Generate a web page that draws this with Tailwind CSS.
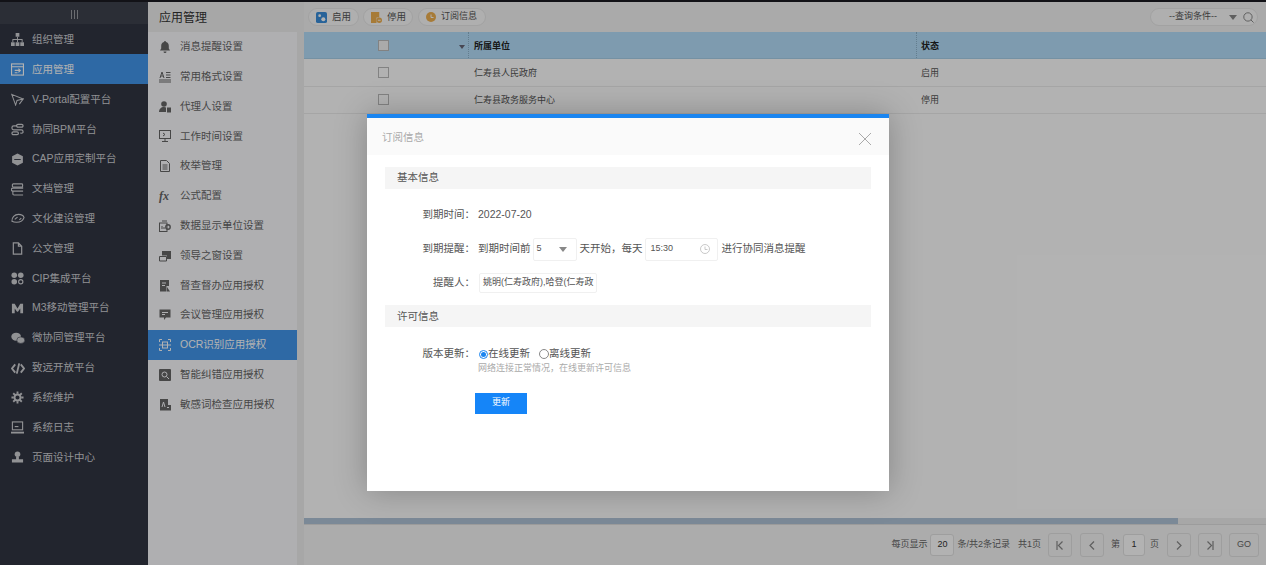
<!DOCTYPE html>
<html lang="zh-CN">
<head>
  <meta charset="UTF-8" />
  <title>应用管理</title>
  <script src="https://cdn.jsdelivr.net/npm/@tailwindcss/browser@4"></script>
</head>
<body class="relative w-[1266px] h-[565px] overflow-hidden bg-white font-['Liberation_Sans','Noto_Sans_CJK_SC',sans-serif] text-[10.5px] text-[#555]">
  <div class="h-[2px] bg-[#1a1b22]"></div>
  <div class="flex h-[563px]">
    <!-- main nav -->
    <aside class="w-[148px] shrink-0 bg-[#323643] text-[#d0d1d5]">
      <div class="h-[22px] pt-[2px] flex items-center justify-center gap-[2px] bg-[#3e424e]">
        <i class="block w-px h-[9px] bg-[#9a9ca3]"></i><i class="block w-px h-[9px] bg-[#9a9ca3]"></i><i class="block w-px h-[9px] bg-[#9a9ca3]"></i>
      </div>
      <nav class="flex flex-col">
        <a class="h-[29.83px] pt-[2px] flex items-center gap-[8px] pl-[11px]">
          <svg class="w-[13px] h-[13px]" viewBox="0 0 14 14" fill="currentColor"><rect x="5" y="0" width="4" height="4"/><rect x="0" y="10" width="4" height="4"/><rect x="5" y="10" width="4" height="4"/><rect x="10" y="10" width="4" height="4"/><path d="M6.500 4h1v2.500h5V10h-1V7.500h-4V10h-1V7.500h-4V10h-1V6.500h5z"/></svg>
          组织管理
        </a>
        <a class="h-[29.83px] pt-[2px] flex items-center gap-[8px] pl-[11px] bg-[#4397ec] text-white">
          <svg class="w-[13px] h-[13px]" viewBox="0 0 14 14" fill="none" stroke="currentColor" stroke-width="1.200"><rect x=".6" y="1" width="12.800" height="12"/><path d="M.6 4h12.800M4 8h6M8 6l2 2-2 2M4 10.500h3"/></svg>
          应用管理
        </a>
        <a class="h-[29.83px] pt-[2px] flex items-center gap-[8px] pl-[11px]">
          <svg class="w-[13px] h-[13px]" viewBox="0 0 14 14" fill="none" stroke="currentColor" stroke-width="1.100"><path d="M.8 1.500 13 6.500 6.500 8l-1.500 5zM6.500 8 13 6.500 9 12"/></svg>
          V-Portal配置平台
        </a>
        <a class="h-[29.83px] pt-[2px] flex items-center gap-[8px] pl-[11px]">
          <svg class="w-[13px] h-[13px]" viewBox="0 0 14 14" fill="none" stroke="currentColor" stroke-width="1.300"><rect x="6" y="1.500" width="7" height="3" rx="1.500"/><rect x="1" y="9.500" width="7" height="3" rx="1.500"/><path d="M6 3H3a2 2 0 0 0-2 2v.500a2 2 0 0 0 2 2h8a2 2 0 0 1 2 2v.500a2 2 0 0 1-2 1h-1"/></svg>
          协同BPM平台
        </a>
        <a class="h-[29.83px] pt-[2px] flex items-center gap-[8px] pl-[11px]">
          <svg class="w-[13px] h-[13px]" viewBox="0 0 14 14" fill="currentColor"><path d="M7 .5 12.800 3.500v7L7 13.500 1.200 10.500v-7z"/><path d="M3.500 6.500h7v1h-7z" fill="#323643"/></svg>
          CAP应用定制平台
        </a>
        <a class="h-[29.83px] pt-[2px] flex items-center gap-[8px] pl-[11px]">
          <svg class="w-[13px] h-[13px]" viewBox="0 0 14 14" fill="none" stroke="currentColor" stroke-width="1.200"><rect x="1.500" y="1" width="11" height="3.500" rx="1"/><path d="M12.500 4.500v1H2a1.200 1.200 0 0 0 0 3.200h11M2 8.700v3a1.200 1.200 0 0 0 1.200 1.200h9.800"/></svg>
          文档管理
        </a>
        <a class="h-[29.83px] pt-[2px] flex items-center gap-[7px] pl-[11px]">
          <svg class="w-[14px] h-[13px]" viewBox="0 0 15 14" fill="none" stroke="currentColor" stroke-width="1.200"><path d="M1 10c-.5-4 3-7.500 7-7.500 3 0 5.500 1.500 6 3.500-1 3-4 5-8 5-2 0-4-.5-5-1zM4 8l3-2.500M9 8.500l2-2"/></svg>
          文化建设管理
        </a>
        <a class="h-[29.83px] pt-[2px] flex items-center gap-[8px] pl-[11px]">
          <svg class="w-[13px] h-[13px]" viewBox="0 0 14 14" fill="none" stroke="currentColor" stroke-width="1.300"><path d="M2.500 1h5.500l3.500 3.500V13h-9zM8 1v3.500h3.500"/></svg>
          公文管理
        </a>
        <a class="h-[29.83px] pt-[2px] flex items-center gap-[8px] pl-[11px]">
          <svg class="w-[13px] h-[13px]" viewBox="0 0 14 14" fill="currentColor"><circle cx="3.500" cy="3.500" r="3"/><circle cx="10.500" cy="3.500" r="3"/><circle cx="3.500" cy="10.500" r="3"/><circle cx="10.500" cy="10.500" r="2.300" fill="none" stroke="currentColor" stroke-width="1.200"/></svg>
          CIP集成平台
        </a>
        <a class="h-[29.83px] pt-[2px] flex items-center gap-[8px] pl-[11px]">
          <svg class="w-[13px] h-[13px]" viewBox="0 0 14 14" fill="currentColor"><path d="M1 2h3l3 5 3-5h3v10h-3V7L7.500 10.500h-1L4 7v5H1z"/></svg>
          M3移动管理平台
        </a>
        <a class="h-[29.83px] pt-[2px] flex items-center gap-[7px] pl-[11px]">
          <svg class="w-[14px] h-[13px]" viewBox="0 0 15 14" fill="currentColor"><ellipse cx="5.500" cy="5" rx="5.200" ry="4.300"/><ellipse cx="10.500" cy="8.800" rx="4.300" ry="3.500" stroke="#323643" stroke-width=".6"/></svg>
          微协同管理平台
        </a>
        <a class="h-[29.83px] pt-[2px] flex items-center gap-[7px] pl-[11px]">
          <svg class="w-[14px] h-[13px]" viewBox="0 0 15 14" fill="none" stroke="currentColor" stroke-width="2"><path d="M4.500 2.500 1 7l3.500 4.500M10.500 2.500 14 7l-3.500 4.500M8.800 1.500 6.200 12.500"/></svg>
          致远开放平台
        </a>
        <a class="h-[29.83px] pt-[2px] flex items-center gap-[8px] pl-[11px]">
          <svg class="w-[13px] h-[13px]" viewBox="0 0 14 14" fill="none" stroke="currentColor"><circle cx="7" cy="7" r="3.200" stroke-width="2"/><path d="M7 .5v2.500M7 11v2.500M.5 7H3M11 7h2.500M2.400 2.400l1.800 1.800M9.800 9.800l1.800 1.800M2.400 11.600l1.800-1.800M9.800 4.200l1.800-1.800" stroke-width="2"/></svg>
          系统维护
        </a>
        <a class="h-[29.83px] pt-[2px] flex items-center gap-[8px] pl-[11px]">
          <svg class="w-[13px] h-[13px]" viewBox="0 0 14 14" fill="none" stroke="currentColor" stroke-width="1.200"><rect x="1.500" y="1" width="11" height="8.500"/><path d="M4 6h4"/><path d="M0 11.500h14V13.500H0z" fill="currentColor" stroke="none"/></svg>
          系统日志
        </a>
        <a class="h-[29.83px] pt-[2px] flex items-center gap-[8px] pl-[11px]">
          <svg class="w-[13px] h-[13px]" viewBox="0 0 14 14" fill="currentColor"><circle cx="7" cy="3.500" r="3"/><path d="M5.500 6h3v3h4.500v3.500H1V9h4.500z"/></svg>
          页面设计中心
        </a>
      </nav>
    </aside>

    <!-- sub nav -->
    <aside class="w-[156px] shrink-0 bg-[#f0f0f0]">
      <div class="h-[30px] pt-[2px] flex items-center pl-[11px] text-[12px] text-[#333]">应用管理</div>
      <nav class="w-[149px] h-[533px] flex flex-col bg-[#fbfbfe] text-[#666]">
        <a class="h-[29.83px] flex items-center gap-[9px] pl-[11px]">
          <svg class="w-[12px] h-[12px]" viewBox="0 0 12 12" fill="currentColor"><path d="M6 0a1 1 0 0 1 1 1c2 .5 2.800 2 2.800 4v2.500L11 9.500H1l1.200-2V5c0-2 .8-3.500 2.800-4a1 1 0 0 1 1-1zM4.500 10.500h3a1.500 1.500 0 0 1-3 0z"/></svg>
          消息提醒设置
        </a>
        <a class="h-[29.83px] flex items-center gap-[9px] pl-[11px]">
          <svg class="w-[12px] h-[12px]" viewBox="0 0 12 12" fill="none" stroke="currentColor"><path d="M1 7 3 1l2 6M1.800 5h2.400M7 1.500h4.500M7 4h4.500M7 6.500h4.500M0 9h12M0 11h12"/></svg>
          常用格式设置
        </a>
        <a class="h-[29.83px] flex items-center gap-[9px] pl-[11px]">
          <svg class="w-[12px] h-[12px]" viewBox="0 0 12 12" fill="currentColor"><circle cx="5" cy="3" r="2.800"/><path d="M0 11c0-3 2-5 5-5 1 0 1.500.2 2 .5V11z"/><rect x="8" y="6.500" width="4" height="5"/></svg>
          代理人设置
        </a>
        <a class="h-[29.83px] flex items-center gap-[9px] pl-[11px]">
          <svg class="w-[12px] h-[12px]" viewBox="0 0 12 12" fill="none" stroke="currentColor"><rect x=".5" y=".5" width="11" height="8"/><path d="M6 8.500V11M3 11.500h6M4 3l2 1.500L4 6"/></svg>
          工作时间设置
        </a>
        <a class="h-[29.83px] flex items-center gap-[9px] pl-[11px]">
          <svg class="w-[12px] h-[12px]" viewBox="0 0 12 12" fill="none" stroke="currentColor"><path d="M1.500.5h6l3 3v8h-9zM3.500 5h5M3.500 7h5M3.500 9h5"/></svg>
          枚举管理
        </a>
        <a class="h-[29.83px] flex items-center gap-[9px] pl-[11px]">
          <span class="w-[12px] font-['Liberation_Serif',serif] italic font-bold text-[12px] leading-none">fx</span>
          公式配置
        </a>
        <a class="h-[29.83px] flex items-center gap-[9px] pl-[11px]">
          <svg class="w-[12px] h-[12px]" viewBox="0 0 12 12" fill="none" stroke="currentColor"><rect x=".5" y="3" width="7.500" height="8.500"/><circle cx="9" cy="7" r="2.200" stroke-width="1.400"/><path d="M3 1h5M3 9V6M5 9V7"/></svg>
          数据显示单位设置
        </a>
        <a class="h-[29.83px] flex items-center gap-[9px] pl-[11px]">
          <svg class="w-[12px] h-[12px]" viewBox="0 0 12 12" fill="currentColor"><path d="M3 1h9v8H8V5.500H3z"/><path d="M.5 6.500h7v4.500H.5z" fill="none" stroke="currentColor"/></svg>
          领导之窗设置
        </a>
        <a class="h-[29.83px] flex items-center gap-[9px] pl-[11px]">
          <svg class="w-[12px] h-[12px]" viewBox="0 0 12 12" fill="currentColor"><path d="M1 0h9v6H7.500v5.500H1z"/><path d="M3 3h4M3 5.500h3" stroke="#fbfbfe"/><path d="M8 7l3 4.500H8z"/></svg>
          督查督办应用授权
        </a>
        <a class="h-[29.83px] flex items-center gap-[9px] pl-[11px]">
          <svg class="w-[12px] h-[12px]" viewBox="0 0 12 12" fill="currentColor"><path d="M.5.500h11v8H7L5 11V8.500H.5z"/><path d="M3 3.500h6M3 5.500h3" stroke="#fbfbfe"/></svg>
          会议管理应用授权
        </a>
        <a class="h-[29.83px] flex items-center gap-[9px] pl-[11px] bg-[#4397ec] text-white">
          <svg class="w-[12px] h-[12px]" viewBox="0 0 12 12" fill="none" stroke="currentColor"><path d="M.5 3V.5H3M9 .5h2.500V3M.5 9v2.500H3M9 11.500h2.500V9M0 6h12"/><rect x="3.500" y="3" width="5" height="6"/></svg>
          OCR识别应用授权
        </a>
        <a class="h-[29.83px] flex items-center gap-[9px] pl-[11px]">
          <svg class="w-[12px] h-[12px]" viewBox="0 0 12 12"><rect width="12" height="12" rx="1" fill="currentColor"/><circle cx="5.500" cy="5.500" r="2.500" fill="none" stroke="#fbfbfe"/><path d="M7.500 7.500 10 10" stroke="#fbfbfe"/></svg>
          智能纠错应用授权
        </a>
        <a class="h-[29.83px] flex items-center gap-[9px] pl-[11px]">
          <svg class="w-[12px] h-[12px]" viewBox="0 0 12 12" fill="currentColor"><path d="M1 0h8v6h3v5.500H1z"/><path d="M3 8 4.500 3 6 8M8 8.500h2" fill="none" stroke="#fbfbfe"/></svg>
          敏感词检查应用授权
        </a>
      </nav>
    </aside>

    <!-- main content -->
    <main class="flex-1 min-w-0 flex flex-col bg-white">
      <div class="h-[30px] flex items-center justify-between pl-[4px] pr-[8px] bg-[#f4f4f4]">
        <div class="flex items-center text-[#555] text-[9.500px]">
          <button class="w-[51px] h-[18px] mr-[4px] rounded-full bg-[#fbfbfb] border border-[#e8e8e8] flex items-center pl-[7px] gap-[5px]">
            <svg class="w-[11px] h-[11px]" viewBox="0 0 12 12"><rect width="12" height="12" rx="2" fill="#3a8fdc"/><circle cx="4" cy="4" r="1.500" fill="#fff"/><circle cx="8" cy="8" r="2.200" fill="#fff"/></svg>
            启用
          </button>
          <button class="w-[50px] h-[18px] mr-[5px] rounded-full bg-[#fbfbfb] border border-[#e8e8e8] flex items-center pl-[7px] gap-[5px]">
            <svg class="w-[11px] h-[11px]" viewBox="0 0 12 12"><path d="M0 0h9v6H6v6H0z" fill="#f0b050"/><circle cx="9" cy="9" r="3" fill="#f0b050"/><path d="M7.500 9h3" stroke="#fff"/></svg>
            停用
          </button>
          <button class="w-[68px] h-[18px] rounded-full bg-[#fbfbfb] border border-[#e8e8e8] flex items-center pl-[7px] gap-[5px] text-[9px]">
            <svg class="w-[10px] h-[10px]" viewBox="0 0 10 10"><circle cx="5" cy="5" r="5" fill="#f0b050"/><path d="M5 2.500V5.500H7.500" stroke="#fff" fill="none"/></svg>
            订阅信息
          </button>
        </div>
        <div class="w-[108px] h-[18px] rounded-full bg-[#fbfbfb] border border-[#e8e8e8] flex items-center justify-end pr-[3px] text-[9px] text-[#555]">
          <span class="mr-[12px]">--查询条件--</span>
          <i class="block mr-[6px] border-x-[4px] border-x-transparent border-t-[5px] border-t-[#888]"></i>
          <svg class="w-[11px] h-[11px]" viewBox="0 0 10 10" fill="none" stroke="#888" stroke-width=".9"><circle cx="4.500" cy="4.500" r="3.800"/><path d="m7.300 7.300 2.300 2.300"/></svg>
        </div>
      </div>
      <div class="h-[27px] flex items-center bg-[#b5dffb] text-[9px] font-bold text-[#222] border-b border-[#a8d0ea]">
        <div class="relative w-[165px] h-full flex items-center pl-[74px] border-r border-dotted border-[#8fb4cc]">
          <i class="block w-[11px] h-[11px] bg-[#f4f4f4] border border-[#bbb]"></i>
          <i class="absolute left-[155px] top-[13px] border-x-[3.500px] border-x-transparent border-t-[4px] border-t-[#667]"></i>
        </div>
        <div class="w-[447px] pl-[5px] pt-[3px]">所属单位</div>
        <div class="flex-1 h-full flex items-center pl-[4px] pt-[3px] border-l border-dotted border-[#8fb4cc]">状态</div>
      </div>
      <div class="h-[27.500px] flex items-center text-[9px] border-b border-[#ececec]">
        <div class="w-[165px] pl-[74px]"><i class="block w-[11px] h-[11px] bg-white border border-[#bbb]"></i></div>
        <div class="w-[447px] pl-[5px] pt-[2px]">仁寿县人民政府</div>
        <div class="pl-[5px] pt-[2px]">启用</div>
      </div>
      <div class="h-[27.500px] flex items-center text-[9px] border-b border-[#ececec]">
        <div class="w-[165px] pl-[74px]"><i class="block w-[11px] h-[11px] bg-white border border-[#bbb]"></i></div>
        <div class="w-[447px] pl-[5px] pt-[2px]">仁寿县政务服务中心</div>
        <div class="pl-[5px] pt-[2px]">停用</div>
      </div>
      <div class="flex-1"></div>
      <div class="h-[6px] bg-[#f0f0f0]"><div class="w-[874px] h-full bg-[#b0c4d8]"></div></div>
      <div class="h-[41px] flex items-center justify-end pr-[7px] bg-[#f6f6f6] border-t border-[#e0e0e0] text-[9px] text-[#666]">
        <span>每页显示</span>
        <span class="ml-[3px] w-[24px] h-[22px] flex items-center justify-center rounded-[3px] bg-white border border-[#e2e2e2] text-[#333]">20</span>
        <span class="ml-[3px]">条/共2条记录</span>
        <span class="ml-[8px]">共1页</span>
        <span class="ml-[7px] w-[24px] h-[24px] flex items-center justify-center rounded-[3px] border border-[#e2e2e2]">
          <svg class="w-[8px] h-[9px]" viewBox="0 0 8 9" fill="none" stroke="#888" stroke-width="1.200"><path d="M1 0v9M6.500 .5 2.500 4.500l4 4"/></svg>
        </span>
        <span class="ml-[8px] w-[24px] h-[24px] flex items-center justify-center rounded-[3px] border border-[#e2e2e2]">
          <svg class="w-[6px] h-[9px]" viewBox="0 0 6 9" fill="none" stroke="#888" stroke-width="1.200"><path d="M5 .5 1 4.500l4 4"/></svg>
        </span>
        <span class="ml-[7px]">第</span>
        <span class="ml-[3px] w-[22px] h-[22px] flex items-center justify-center rounded-[3px] bg-white border border-[#e2e2e2] text-[#333]">1</span>
        <span class="ml-[5px]">页</span>
        <span class="ml-[8px] w-[24px] h-[24px] flex items-center justify-center rounded-[3px] border border-[#e2e2e2]">
          <svg class="w-[6px] h-[9px]" viewBox="0 0 6 9" fill="none" stroke="#888" stroke-width="1.200"><path d="m1 .5 4 4-4 4"/></svg>
        </span>
        <span class="ml-[7px] w-[24px] h-[24px] flex items-center justify-center rounded-[3px] border border-[#e2e2e2]">
          <svg class="w-[8px] h-[9px]" viewBox="0 0 8 9" fill="none" stroke="#888" stroke-width="1.200"><path d="M7 0v9M1.500 .5l4 4-4 4"/></svg>
        </span>
        <span class="ml-[7px] w-[30px] h-[24px] flex items-center justify-center rounded-[3px] border border-[#e2e2e2]">GO</span>
      </div>
    </main>
  </div>

  <!-- mask -->
  <div class="absolute inset-0 bg-black/30"></div>

  <!-- dialog -->
  <section class="absolute left-[367px] top-[114px] w-[522px] h-[377px] bg-white border-t-[4px] border-[#1a85f0] shadow-[0_0_30px_rgba(0,0,0,0.25)]">
    <header class="h-[37px] flex items-center justify-between pl-[15px] pr-[18px] bg-[#fafafa] text-[#aaa]">
      <span class="pt-[2px]">订阅信息</span>
      <svg class="w-[12px] h-[12px] mt-[5px]" viewBox="0 0 12 12" fill="none" stroke="#aaa"><path d="m0 0 12 12M12 0 0 12"/></svg>
    </header>
    <div class="px-[18px] pt-[12px]">
      <h3 class="h-[22px] flex items-center pl-[12px] bg-[#f5f5f5] font-normal">基本信息</h3>
      <div class="flex items-center h-[20px] mt-[16px]">
        <label class="w-[90px] text-right">到期时间：</label>
        <span class="ml-[3px]">2022-07-20</span>
      </div>
      <div class="flex items-center h-[24px] mt-[12px]">
        <label class="w-[90px] text-right">到期提醒：</label>
        <span class="ml-[3px]">到期时间前</span>
        <span class="ml-[2px] w-[44px] h-[23px] flex items-center justify-between pl-[3px] pr-[9px] border border-[#f0f0f0] rounded-[2px] text-[9px]">5
          <i class="block border-x-[4px] border-x-transparent border-t-[5px] border-t-[#888]"></i>
        </span>
        <span class="ml-[3px]">天开始，每天</span>
        <span class="ml-[2px] w-[73px] h-[23px] flex items-center justify-between pl-[5px] pr-[7px] border border-[#f0f0f0] rounded-[2px] text-[9px]">15:30
          <svg class="w-[10px] h-[10px]" viewBox="0 0 10 10" fill="none" stroke="#bbb" stroke-width=".8"><circle cx="5" cy="5" r="4.500"/><path d="M5 2.500V5.500H7.500"/></svg>
        </span>
        <span class="ml-[4px]">进行协同消息提醒</span>
      </div>
      <div class="flex items-center h-[21px] mt-[11px]">
        <label class="w-[90px] text-right">提醒人：</label>
        <span class="ml-[4px] w-[118px] h-[20px] flex items-center pl-[3px] overflow-hidden whitespace-nowrap border border-[#f0f0f0] rounded-[2px] text-[9px]">姚明(仁寿政府),哈登(仁寿政</span>
      </div>
      <h3 class="h-[22px] flex items-center pl-[12px] pt-[2px] mt-[12px] bg-[#f5f5f5] font-normal">许可信息</h3>
      <div class="flex items-center h-[16px] mt-[19px]">
        <label class="w-[90px] text-right">版本更新：</label>
        <span class="ml-[4px] flex items-center">
          <i class="flex items-center justify-center w-[9px] h-[9px] rounded-full border border-[#1a85f0]"><i class="block w-[5px] h-[5px] rounded-full bg-[#1a85f0]"></i></i>在线更新
          <i class="block ml-[9px] w-[10px] h-[10px] rounded-full border border-[#888]"></i>离线更新
        </span>
      </div>
      <p class="ml-[93px] text-[9px] text-[#aaa]">网络连接正常情况，在线更新许可信息</p>
      <button class="block ml-[90px] mt-[17px] w-[52px] h-[21px] bg-[#1585f8] text-white text-[9px]">更新</button>
    </div>
  </section>
</body>
</html>
